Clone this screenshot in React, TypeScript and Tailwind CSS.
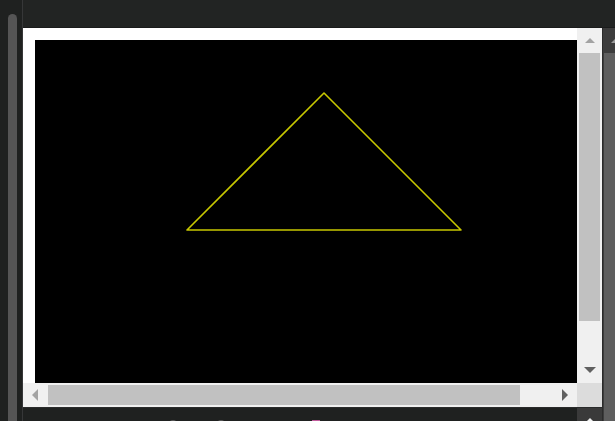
import React from "react";

const Tri = ({ dir, color, w, h }: { dir: "up" | "down" | "left" | "right"; color: string; w: number; h: number }) => {
  const pts =
    dir === "up"
      ? `0,${h} ${w / 2},0 ${w},${h}`
      : dir === "down"
      ? `0,0 ${w},0 ${w / 2},${h}`
      : dir === "left"
      ? `${w},0 0,${h / 2} ${w},${h}`
      : `0,0 ${w},${h / 2} 0,${h}`;
  return (
    <svg width={w} height={h} viewBox={`0 0 ${w} ${h}`} className="block">
      <polygon points={pts} fill={color} />
    </svg>
  );
};

export default function App() {
  return (
    <div className="w-[615px] h-[421px] overflow-hidden flex bg-[#1f2120]" style={{ fontFamily: "'Liberation Sans', sans-serif" }}>
      {/* left strip */}
      <div className="w-[22px] h-full shrink-0 pt-[14px] pl-[8px]">
        <div className="w-[9px] h-full rounded-t-full bg-[#555555]" />
      </div>
      <div className="w-px h-full shrink-0 bg-[#363738]" />

      {/* main */}
      <div className="flex flex-col h-full shrink-0 w-[604px]">
        <div className="h-[28px] shrink-0 bg-[#222423] border-b border-[#1a1b1b]" />
        <div className="flex flex-1 min-h-0">
          <div className="w-[579px] shrink-0 flex flex-col">
            <div className="h-[379px] shrink-0 grid grid-cols-[554px_25px] grid-rows-[355px_24px]">
              {/* canvas */}
              <div className="bg-white overflow-hidden pl-[12px] pt-[12px]">
                <div className="w-[620px] h-[420px] bg-black">
                  <svg width="620" height="420" className="block">
                    <polygon
                      points="289,53 152,190 426,190"
                      fill="none"
                      stroke="#c8c800"
                      strokeWidth="1.6"
                      strokeLinejoin="round"
                    />
                  </svg>
                </div>
              </div>
              {/* vertical scrollbar */}
              <div className="bg-[#f0f0f0] flex flex-col">
                <div className="h-[25px] shrink-0 flex items-start justify-center pt-[10px]">
                  <Tri dir="up" color="#a3a3a3" w={10} h={5} />
                </div>
                <div className="flex-1 px-[2px]">
                  <div className="h-[268px] bg-[#c1c1c1]" />
                </div>
                <div className="h-[25px] shrink-0 flex items-start justify-center pt-[9px]">
                  <Tri dir="down" color="#606060" w={12} h={6} />
                </div>
              </div>
              {/* horizontal scrollbar */}
              <div className="bg-[#f0f0f0] flex">
                <div className="w-[25px] shrink-0 flex items-center justify-start pl-[9px]">
                  <Tri dir="left" color="#a3a3a3" w={6} h={12} />
                </div>
                <div className="flex-1 py-[2px]">
                  <div className="w-[472px] h-full bg-[#c1c1c1]" />
                </div>
                <div className="w-[25px] shrink-0 flex items-center justify-start pl-[10px]">
                  <Tri dir="right" color="#606060" w={6} h={12} />
                </div>
              </div>
              <div className="bg-[#dcdcdc]" />
            </div>
            {/* bottom panel */}
            <div className="flex-1 flex border-t border-[#2a2b2b]">
              <div className="flex-1 relative">
                <div className="absolute left-[146px] top-[12px] w-[8px] h-[8px] rounded-full bg-[#5a5a5a]" />
                <div className="absolute left-[194px] top-[12px] w-[8px] h-[8px] rounded-full bg-[#5a5a5a]" />
                <div className="absolute left-[245px] top-[13px] w-[3px] h-[3px] rounded-full bg-[#5a5a5a]" />
                <div className="absolute left-[289px] top-[12px] w-[8px] h-[8px] bg-[#c05c9c]" />
              </div>
              <div className="w-[25px] shrink-0 bg-[#3a3a3a] flex justify-center pt-[10px]">
                <Tri dir="up" color="#f0f0f0" w={8} h={4} />
              </div>
            </div>
          </div>
          <div className="w-px shrink-0 bg-[#2b2b2b]" />
          {/* outer right scrollbar */}
          <div className="w-[25px] shrink-0 bg-[#3c3c3c] flex flex-col">
            <div className="h-[25px] shrink-0 flex justify-center pt-[10px]">
              <Tri dir="up" color="#9a9a9a" w={10} h={5} />
            </div>
            <div className="flex-1 px-[1px]">
              <div className="h-full bg-[#5e5e5e]" />
            </div>
          </div>
        </div>
      </div>
    </div>
  );
}
